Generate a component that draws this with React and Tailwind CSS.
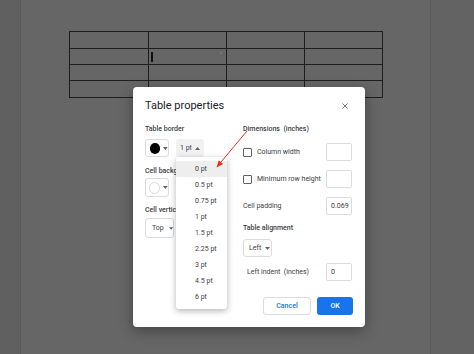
import React from 'react';

const font = { fontFamily: 'Roboto, "Noto Sans", sans-serif' };

function Caret({ up = false, className = '' }) {
  return (
    <svg width="5" height="3" viewBox="0 0 5 3" className={className}>
      <path d={up ? 'M0 3 L2.5 0 L5 3 Z' : 'M0 0 L5 0 L2.5 3 Z'} fill="#5f6368" />
    </svg>
  );
}

function Checkbox() {
  return <div className="w-[9px] h-[9px] border-[1.5px] border-[#5f6368] rounded-[1px] shrink-0" />;
}

function Field({ value }) {
  return (
    <div className="w-[26px] h-[18px] border border-[#dadce0] rounded-[2px] flex items-center pl-[4px] text-[7px] text-[#3c4043]">
      {value}
    </div>
  );
}

const sizes = ['0 pt', '0.5 pt', '0.75 pt', '1 pt', '1.5 pt', '2.25 pt', '3 pt', '4.5 pt', '6 pt'];

export default function App() {
  return (
    <div className="relative w-[474px] h-[354px] overflow-hidden flex bg-[#606060]" style={font}>
      {/* doc behind the overlay */}
      <div className="w-[21px] h-full bg-[#606060] border-r border-[#595959]" />
      <div className="w-[410px] h-full bg-[#666666] border-r border-[#595959] pt-[31px] pl-[48px]">
        <div className="relative">
          <table className="border-collapse">
            <tbody>
              {[17, 16, 16, 17].map((h, r) => (
                <tr key={r}>
                  {[79, 78, 78, 78].map((w, c) => (
                    <td
                      key={c}
                      className="border border-[#1e1e1e] p-0"
                      style={{ width: w, height: h }}
                    />
                  ))}
                </tr>
              ))}
            </tbody>
          </table>
          {/* caret + stray dot */}
          <div className="absolute left-[82px] top-[21px] w-[1.5px] h-[10px] bg-[#111]" />
          <div className="absolute left-[151px] top-[21px] w-[2px] h-[2px] rounded-full bg-[#7a7a7a]" />
        </div>
      </div>
      <div className="flex-1 h-full bg-[#636363]" />

      {/* dialog */}
      <div className="absolute left-[133px] top-[87px] w-[232px] h-[240px] bg-white rounded-[4px] shadow-[0_4px_14px_rgba(0,0,0,0.35)] pl-[12px] pr-[12px] pt-[12px] flex flex-col">
        <div className="flex items-center justify-between h-[14px]">
          <span className="text-[11px] leading-[14px] text-[#202124]">Table properties</span>
          <svg width="6" height="6" viewBox="0 0 6 6" className="mr-[5px]">
            <path d="M0.5 0.5 L5.5 5.5 M5.5 0.5 L0.5 5.5" stroke="#777" strokeWidth="1" />
          </svg>
        </div>

        <div className="flex mt-[11px] text-[7px] leading-[10px] text-[#3c4043]">
          {/* left column */}
          <div className="w-[98px] flex flex-col">
            <span className="font-medium">Table border</span>
            <div className="flex gap-[7px] mt-[5px]">
              <div className="w-[24px] h-[18px] border border-[#dadce0] rounded-[3px] flex items-center pl-[4px] gap-[3px]">
                <div className="w-[11px] h-[11px] rounded-full bg-black" />
                <Caret />
              </div>
              <div className="w-[28px] h-[18px] bg-[#f1f1f1] rounded-[3px] flex items-center pl-[4px] gap-[3px]">
                <span>1 pt</span>
                <Caret up />
              </div>
            </div>
            {/* labels run under the open menu, so clip them at its left edge */}
            <span className="font-medium mt-[9px] w-[31px] overflow-hidden whitespace-nowrap">Cell background color</span>
            <div className="mt-[2px] w-[24px] h-[19px] border border-[#dadce0] rounded-[3px] flex items-center pl-[3px] gap-[3px]">
              <div className="w-[12px] h-[12px] rounded-full border border-[#dadce0] bg-white" />
              <Caret />
            </div>
            <span className="font-medium mt-[8px] w-[31px] overflow-hidden whitespace-nowrap">Cell vertical alignment</span>
            <div className="mt-[3px] w-[29px] h-[20px] border border-[#dadce0] rounded-[3px] flex items-center pl-[6px] gap-[5px]">
              <span>Top</span>
              <Caret />
            </div>
          </div>

          {/* right column */}
          <div className="w-[109px] flex flex-col">
            <span className="font-medium whitespace-pre">Dimensions  (inches)</span>
            <div className="flex items-center justify-between mt-[9px]">
              <div className="flex items-center gap-[5px]">
                <Checkbox />
                <span>Column width</span>
              </div>
              <Field value="" />
            </div>
            <div className="flex items-center justify-between mt-[9px]">
              <div className="flex items-center gap-[5px]">
                <Checkbox />
                <span>Minimum row height</span>
              </div>
              <Field value="" />
            </div>
            <div className="flex items-center justify-between mt-[9px]">
              <span>Cell padding</span>
              <Field value="0.069" />
            </div>
            <span className="font-medium mt-[8px]">Table alignment</span>
            <div className="mt-[6px] w-[29px] h-[18px] border border-[#dadce0] rounded-[3px] flex items-center pl-[5px] gap-[4px]">
              <span>Left</span>
              <Caret />
            </div>
            <div className="flex items-center justify-between mt-[6px] pl-[4px]">
              <span className="whitespace-pre">Left indent  (inches)</span>
              <Field value="0" />
            </div>
          </div>
        </div>

        <div className="flex justify-end gap-[6px] mt-[16px]">
          <button className="w-[48px] h-[18px] border border-[#dadce0] rounded-[3px] text-[7px] font-medium text-[#1a73e8] bg-white">
            Cancel
          </button>
          <button className="w-[36px] h-[18px] rounded-[3px] text-[7px] font-medium text-white bg-[#1a73e8]">
            OK
          </button>
        </div>

        {/* border-width dropdown */}
        <div className="absolute left-[43px] top-[70px] w-[51px] h-[152px] bg-white rounded-[3px] shadow-[0_2px_6px_rgba(0,0,0,0.3)] py-[4px] flex flex-col">
          {sizes.map((s, i) => (
            <div
              key={s}
              className={`h-[16px] flex items-center pl-[19px] text-[7px] text-[#3c4043] ${i === 0 ? 'bg-[#eeeeee]' : ''}`}
            >
              {s}
            </div>
          ))}
        </div>

        {/* red annotation arrow */}
        <svg className="absolute left-0 top-0 pointer-events-none" width="232" height="240" viewBox="0 0 232 240">
          <line x1="114" y1="44" x2="88" y2="75" stroke="#e0321f" strokeWidth="1" />
          <path d="M83.5 80.5 L90.1 76.9 L85.8 73.3 Z" fill="#e0321f" />
        </svg>
      </div>
    </div>
  );
}
